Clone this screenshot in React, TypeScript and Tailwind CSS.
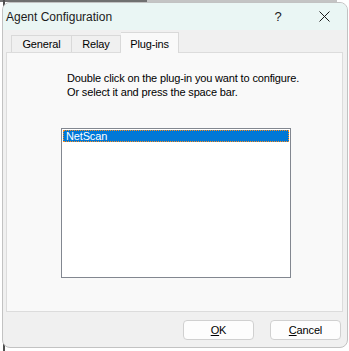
import React from "react";

const font = { fontFamily: '"Liberation Sans", Arial, sans-serif' };

export default function App() {
  return (
    <div
      className="relative w-[349px] h-[351px] bg-white overflow-hidden pt-[2px] pl-[2px]"
      style={font}
    >
      {/* things behind the dialog */}
      <div className="absolute left-0 top-0 h-[2px] w-[147px] bg-[#707070]" />
      <div className="absolute left-[147px] top-0 h-[2px] w-[190px] bg-[#c4c4c4]" />
      <div className="absolute left-[3px] top-0 h-[351px] w-[2px] bg-[#505050]" />

      <div className="relative w-[346px] h-[346px] rounded-[8px] border border-[#c2c2c2] bg-[#f0f0f0] overflow-hidden flex flex-col">
        {/* title bar */}
        <div className="h-[27px] bg-[#eaf6f4] flex items-center shrink-0">
          <span className="pl-[3px] text-[12px] text-[#1b1b1b] leading-none">Agent Configuration</span>
          <div className="ml-auto flex h-full">
            <div className="w-[46px] h-full flex items-center justify-center text-[13px] text-[#1b1b1b]">?</div>
            <div className="w-[46px] h-full flex items-center justify-center">
              <svg width="11" height="11" viewBox="0 0 11 11">
                <path d="M0.5 0.5 L10.5 10.5 M10.5 0.5 L0.5 10.5" stroke="#1b1b1b" strokeWidth="1" />
              </svg>
            </div>
          </div>
        </div>

        {/* body */}
        <div className="flex flex-col pl-[3px] pt-[2px] text-[11px] tracking-[-0.15px] text-black">
          {/* tabs */}
          <div className="flex items-end h-[21px] pl-[5px] relative z-10">
            <div className="w-[61px] h-[17px] border border-b-0 border-[#d9d9d9] bg-[#f0f0f0] flex items-center justify-center pt-[1px] mb-[1px]">
              General
            </div>
            <div className="w-[49px] h-[17px] border border-b-0 border-l-0 border-[#d9d9d9] bg-[#f0f0f0] flex items-center justify-center pt-[1px] mb-[1px]">
              Relay
            </div>
            <div className="w-[58px] h-[21px] border border-b-0 border-l-0 border-[#d9d9d9] bg-[#f9f9f9] flex items-start justify-center pt-[3px]">
              Plug-ins
            </div>
          </div>

          {/* panel */}
          <div className="-mt-[1px] w-[337px] h-[260px] border border-[#dcdcdc] bg-[#f9f9f9] flex flex-col">
            <div className="pl-[60px] pt-[18px] leading-[14px]">
              <div>Double click on the plug-in you want to configure.</div>
              <div>Or select it and press the space bar.</div>
            </div>
            <div className="ml-[54px] mt-[29px] w-[230px] h-[150px] border border-[#828790] bg-white p-[1px]">
              <div className="h-[12px] bg-[#0078d7] text-white leading-[12px] pl-[3px] outline-1 outline-dotted outline-[#ff8c1a] -outline-offset-1">
                NetScan
              </div>
            </div>
          </div>

          {/* buttons */}
          <div className="flex justify-end gap-[16px] pr-[6px] mt-[8px]">
            <button className="w-[71px] h-[20px] rounded-[4px] border border-[#d0d0d0] bg-[#fdfdfd] flex items-center justify-center text-[11px] text-black">
              <span><span className="underline">O</span>K</span>
            </button>
            <button className="w-[71px] h-[20px] rounded-[4px] border border-[#d0d0d0] bg-[#fdfdfd] flex items-center justify-center text-[11px] text-black">
              <span><span className="underline">C</span>ancel</span>
            </button>
          </div>
        </div>
      </div>
    </div>
  );
}
